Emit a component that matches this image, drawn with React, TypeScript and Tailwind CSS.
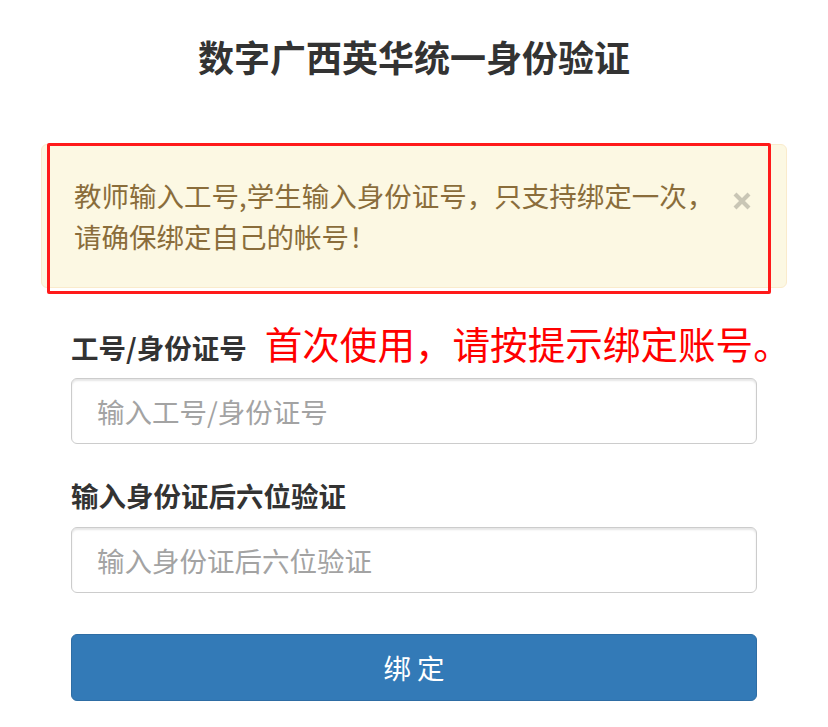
import React from 'react';

const FONT = '"Noto Sans CJK SC", "Noto Sans", sans-serif';

function CloseIcon() {
  return (
    <svg width="18" height="18" viewBox="0 0 18 18" aria-hidden="true">
      <path d="M2 2 L16 16 M16 2 L2 16" stroke="#000" strokeOpacity="0.2" strokeWidth="4.2" />
    </svg>
  );
}

export default function App() {
  return (
    <div className="min-h-[727px] w-full bg-white" style={{ fontFamily: FONT }}>
      <div className="px-[41px] pt-[31px]">
        <h1 className="text-center text-[36px] leading-[50px] font-bold text-[#333]">
          数字广西英华统一身份验证
        </h1>

        {/* notice */}
        <div className="relative mt-[63px]">
          <div className="flex items-start rounded-[6px] border border-[#faebcc] bg-[#fcf8e3] pt-[30px] pb-[30px] pl-[32px] pr-[35px]">
            <p className="text-[27.5px] leading-[41px] text-[#8a6d3b]">
              教师输入工号,学生输入身份证号，只支持绑定一次，
              <br />
              请确保绑定自己的帐号！
            </p>
            <button className="ml-auto mt-[17px] shrink-0" type="button">
              <CloseIcon />
            </button>
          </div>
          {/* annotation frame */}
          <div className="pointer-events-none absolute left-[6px] top-[-1px] h-[151px] w-[724px] rounded-[2px] border-[3px] border-[#ff1a1a]" />
        </div>

        <form className="px-[30px]" onSubmit={(e) => e.preventDefault()}>
          <div className="mt-[27px] flex h-[40px] items-baseline gap-[18px] whitespace-nowrap">
            <label className="shrink-0 text-[27.5px] font-bold text-[#333]">工号/身份证号</label>
            <span className="shrink-0 text-[37.6px] text-[#ff0000]">首次使用，请按提示绑定账号。</span>
          </div>
          <input
            className="mt-[23px] block h-[66px] w-full rounded-[6px] border border-[#ccc] px-[25px] text-[27.5px] text-[#555] shadow-[inset_0_2px_2px_rgba(0,0,0,0.1)] outline-none placeholder:text-[#a3a3a3]"
            placeholder="输入工号/身份证号"
          />

          <label className="mt-[31px] block text-[27.5px] leading-[40px] font-bold text-[#333]">
            输入身份证后六位验证
          </label>
          <input
            className="mt-[12px] block h-[66px] w-full rounded-[6px] border border-[#ccc] px-[25px] text-[27.5px] text-[#555] shadow-[inset_0_2px_2px_rgba(0,0,0,0.1)] outline-none placeholder:text-[#a3a3a3]"
            placeholder="输入身份证后六位验证"
          />

          <button
            type="submit"
            className="mt-[41px] block h-[67px] w-full rounded-[6px] border border-[#2e6da4] bg-[#337ab7] text-[27.5px] text-white"
          >
            绑 定
          </button>
        </form>
      </div>
    </div>
  );
}
